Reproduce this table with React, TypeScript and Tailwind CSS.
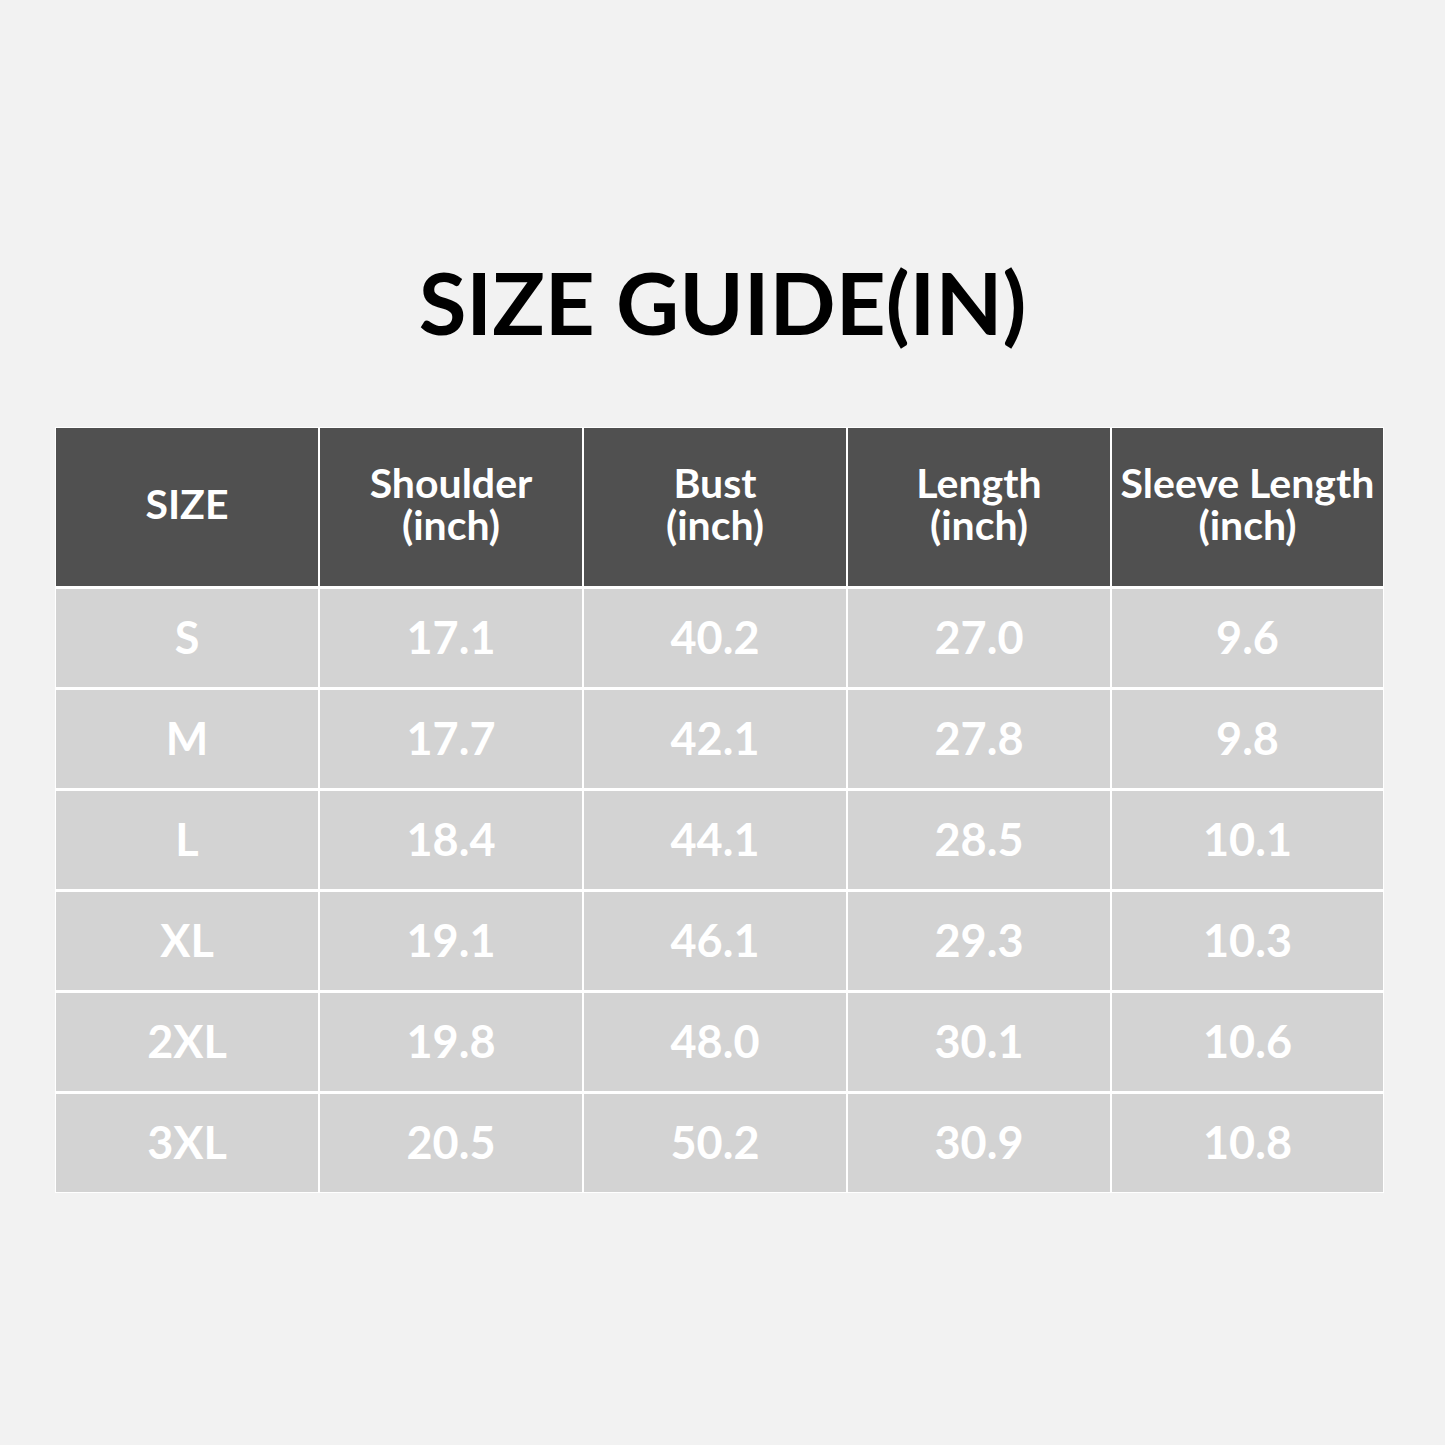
const headers = [
  ["SIZE"],
  ["Shoulder", "(inch)"],
  ["Bust", "(inch)"],
  ["Length", "(inch)"],
  ["Sleeve Length", "(inch)"],
];

const rows = [
  ["S", "17.1", "40.2", "27.0", "9.6"],
  ["M", "17.7", "42.1", "27.8", "9.8"],
  ["L", "18.4", "44.1", "28.5", "10.1"],
  ["XL", "19.1", "46.1", "29.3", "10.3"],
  ["2XL", "19.8", "48.0", "30.1", "10.6"],
  ["3XL", "20.5", "50.2", "30.9", "10.8"],
];

const App = () => {
  return (
    <div
      className="w-[1445px] h-[1445px] bg-[#f2f2f2] flex flex-col items-center"
      style={{ fontFamily: "Lato, 'Open Sans', sans-serif" }}
    >
      {/* Title */}
      <h1 className="mt-[252px] text-[87px] leading-[100px] font-bold text-black">
        SIZE GUIDE(IN)
      </h1>

      {/* Table */}
      <div className="mt-[75px] self-start ml-[55px] w-[1329px] bg-white p-[1px] grid grid-cols-[262px_262px_262px_262px_1fr] gap-[2px] gap-y-[3px]">
        {headers.map((lines, i) => (
          <div
            key={i}
            className="h-[158px] pb-[6px] bg-[#505050] flex flex-col items-center justify-center text-white font-bold text-[41px] leading-[42px]"
          >
            {lines.map((l) => (
              <span key={l}>{l}</span>
            ))}
          </div>
        ))}
        {rows.map((row) =>
          row.map((cell, j) => (
            <div
              key={row[0] + j}
              className="h-[98px] bg-[#d3d3d3] flex items-center justify-center text-white font-bold text-[45px]"
            >
              {cell}
            </div>
          ))
        )}
      </div>
    </div>
  );
};

export default App;
